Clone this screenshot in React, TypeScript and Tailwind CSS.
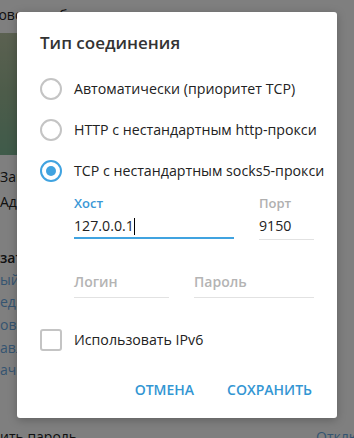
import React, { useState } from 'react';

type Mode = 'auto' | 'http' | 'socks';

const options: { id: Mode; label: string }[] = [
  { id: 'auto', label: 'Автоматически (приоритет TCP)' },
  { id: 'http', label: 'HTTP с нестандартным http-прокси' },
  { id: 'socks', label: 'TCP с нестандартным socks5-прокси' },
];

function Radio({ checked }: { checked: boolean }) {
  return (
    <span
      className={
        checked
          ? 'flex h-[22px] w-[22px] shrink-0 items-center justify-center rounded-full border-2 border-[#40a3e0]'
          : 'flex h-[22px] w-[22px] shrink-0 items-center justify-center rounded-full border-2 border-[#c4c4c4]'
      }
    >
      {checked && <span className="h-[10px] w-[10px] rounded-full bg-[#40a3e0]" />}
    </span>
  );
}

function Background() {
  // the settings page behind the dimmed overlay
  return (
    <div className="flex w-full flex-col bg-white text-[14px] text-[#222]">
      <div className="h-[33px] whitespace-nowrap pt-[5px] leading-[20px]">
        <span className="-ml-[30px]">Фоновое изображение</span>
      </div>
      <div className="h-[122px] w-[120px] bg-gradient-to-b from-[#b6c2a2] via-[#9ab894] to-[#7eb694]" />
      <div className="mt-[11px] h-[22px] whitespace-nowrap leading-[22px]">Загрузить из файла</div>
      <div className="mt-[3px] h-[22px] whitespace-nowrap leading-[22px]">Адаптивный фон</div>
      <div className="mt-[34px] h-[22px] whitespace-nowrap font-semibold leading-[22px]">затели безопасности</div>
      <div className="h-[22px] whitespace-nowrap leading-[22px] text-[#6aa9e2]">ый список</div>
      <div className="h-[22px] whitespace-nowrap leading-[22px] text-[#6aa9e2]">едкие сессии</div>
      <div className="mt-[1px] h-[22px] whitespace-nowrap leading-[22px] text-[#6aa9e2]">овые звонки</div>
      <div className="mt-[1px] h-[22px] whitespace-nowrap leading-[22px] text-[#6aa9e2]">авление группами</div>
      <div className="h-[22px] whitespace-nowrap leading-[22px] text-[#6aa9e2]">ачить пароль</div>
      <div className="mt-[45px] flex h-[22px] justify-between whitespace-nowrap leading-[22px]">
        <span>ить пароль</span>
        <span className="-mr-[40px] text-[#6aa9e2]">Отключено</span>
      </div>
    </div>
  );
}

export default function App() {
  const [mode, setMode] = useState<Mode>('socks');
  const [ipv6, setIpv6] = useState(false);

  return (
    <div
      className="relative h-[438px] w-[354px] overflow-hidden"
      style={{ fontFamily: '"Open Sans", "Noto Sans", sans-serif' }}
    >
      <Background />
      <div className="absolute inset-0 bg-black/50" />

      <div className="absolute left-[17px] top-[12px] flex h-[406px] w-[320px] flex-col rounded-[3px] bg-white shadow-[0_2px_10px_rgba(0,0,0,0.25)]">
        <div className="mt-[21px] h-[20px] pl-[23px] text-[17px] font-semibold leading-[20px] text-[#333]">
          Тип соединения
        </div>

        <div className="mt-[15px] flex flex-col">
          {options.map((o) => (
            <button
              key={o.id}
              onClick={() => setMode(o.id)}
              className="flex h-[41px] items-center gap-[12px] pl-[23px] text-left text-[14.2px] text-[#222]"
            >
              <Radio checked={mode === o.id} />
              <span className="whitespace-nowrap">{o.label}</span>
            </button>
          ))}
        </div>

        <div className="mt-[4px] flex gap-[25px] pl-[57px] pr-[23px]">
          <div className="w-[160px]">
            <div className="h-[16px] text-[13px] font-semibold leading-[16px] text-[#3a98d6]">Хост</div>
            <div className="flex h-[28px] items-start border-b-2 border-[#40a3e0] pt-[4px] text-[14.2px] leading-[22px] text-[#222]">
              127.0.0.1
              <span className="mt-[3px] h-[17px] w-px bg-black" />
            </div>
          </div>
          <div className="w-[55px]">
            <div className="h-[16px] text-[13px] font-semibold leading-[16px] text-[#b0b0b0]">Порт</div>
            <div className="h-[29px] border-b border-[#e2e2e2] pt-[4px] text-[14.2px] leading-[22px] text-[#222]">
              9150
            </div>
          </div>
        </div>

        <div className="mt-[31px] flex gap-[25px] pl-[57px] pr-[23px]">
          <div className="h-[27px] w-[95px] border-b border-[#e2e2e2] text-[14px] font-semibold leading-[22px] text-[#b4b4b4]">
            Логин
          </div>
          <div className="h-[27px] w-[120px] border-b border-[#e2e2e2] text-[14px] font-semibold leading-[22px] text-[#b4b4b4]">
            Пароль
          </div>
        </div>

        <button
          onClick={() => setIpv6(!ipv6)}
          className="mt-[21px] flex h-[42px] items-center gap-[12px] pl-[23px] text-left text-[14.2px] text-[#222]"
        >
          <span
            className={
              ipv6
                ? 'h-[22px] w-[22px] shrink-0 rounded-[3px] border-2 border-[#40a3e0] bg-[#40a3e0]'
                : 'h-[22px] w-[22px] shrink-0 rounded-[3px] border-2 border-[#c4c4c4]'
            }
          />
          <span>Использовать IPv6</span>
        </button>

        <div className="mt-[10px] flex h-[36px] items-center justify-end gap-[33px] pr-[25px] text-[14px] font-semibold text-[#3396d3]">
          <button>ОТМЕНА</button>
          <button>СОХРАНИТЬ</button>
        </div>
      </div>
    </div>
  );
}
